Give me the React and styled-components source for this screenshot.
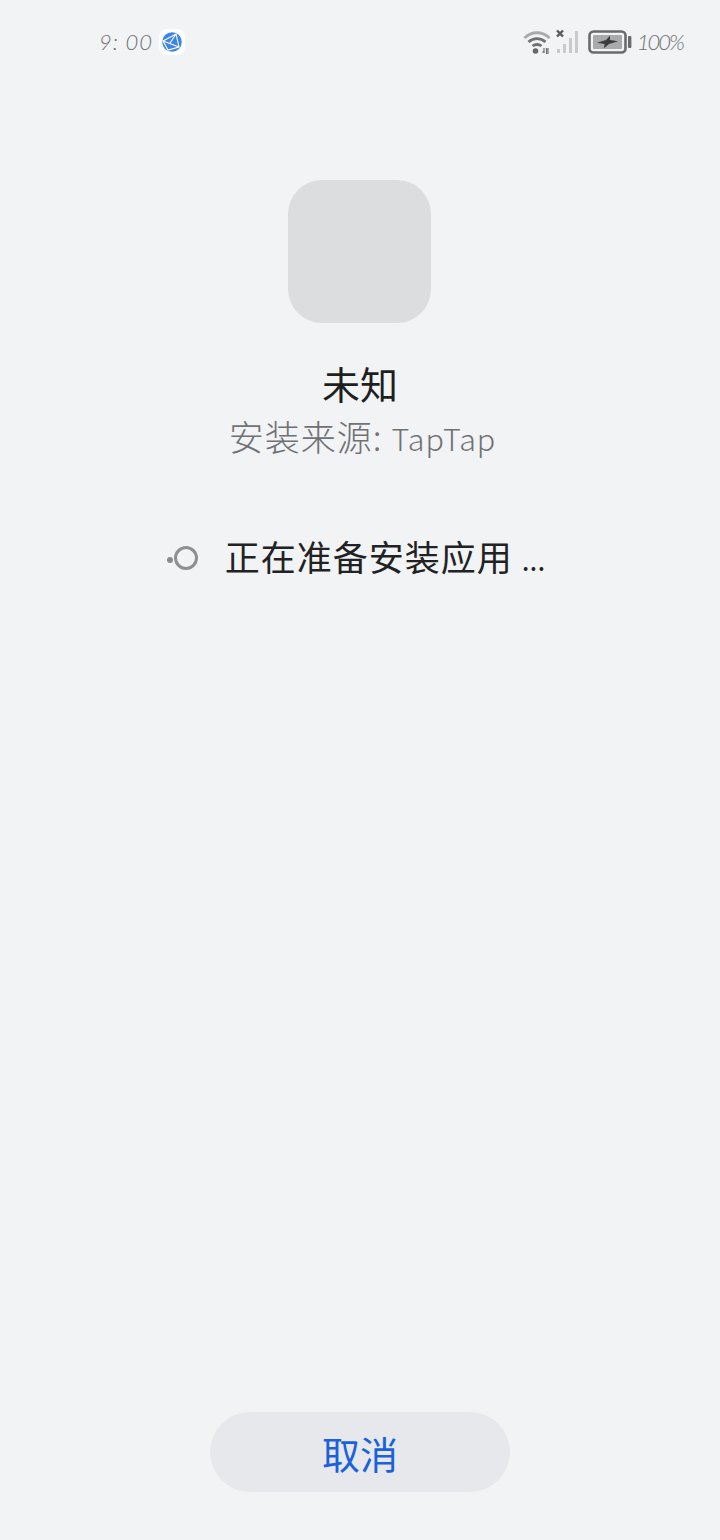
import React from "react";
import styled, { createGlobalStyle } from "styled-components";

const GlobalStyle = createGlobalStyle`
  html, body {
    margin: 0;
    padding: 0;
    background: #f1f3f5;
  }
  body {
    font-family: "Noto Sans CJK SC", "Noto Sans", sans-serif;
  }
`;

const Page = styled.div`
  width: 720px;
  height: 1540px;
  background: #f1f3f5;
  display: flex;
  flex-direction: column;
  align-items: center;
  box-sizing: border-box;
`;

const StatusBar = styled.div`
  width: 100%;
  height: 84px;
  box-sizing: border-box;
  padding: 0 37px 0 99px;
  display: flex;
  align-items: center;
  justify-content: space-between;
  flex-shrink: 0;
`;

const StatusGroup = styled.div`
  display: flex;
  align-items: center;
  gap: ${(p) => p.$gap || 0}px;
`;

const StatusText = styled.span`
  font-family: "Lato", "Liberation Sans", sans-serif;
  font-style: italic;
  font-weight: 300;
  font-size: 22px;
  line-height: 30px;
  letter-spacing: ${(p) => p.$spacing || 0}px;
  color: #6f7173;
`;

const AppIcon = styled.div`
  width: 143px;
  height: 143px;
  margin: 96px 1px 0 0;
  border-radius: 34px;
  background: #dcddde;
  flex-shrink: 0;
`;

const AppName = styled.div`
  margin-top: 33px;
  font-size: 38px;
  line-height: 54px;
  font-weight: 400;
  color: #1f1f1f;
`;

const Source = styled.div`
  padding-left: 5px;
  font-size: 35px;
  line-height: 52px;
  font-weight: 300;
  color: #707172;
  letter-spacing: 1px;
`;

const SourceName = styled.span`
  font-size: 30.5px;
  margin-left: 9px;
`;

const ProgressRow = styled.div`
  margin-top: 67px;
  display: flex;
  align-items: center;
  gap: 27px;
`;

const Spinner = styled.div`
  position: relative;
  width: 24px;
  height: 24px;
  margin-left: 3px;
  border: 3px solid #8e8f90;
  border-radius: 50%;
  box-sizing: border-box;

  &::before {
    content: "";
    position: absolute;
    left: -10px;
    top: 8px;
    width: 6px;
    height: 6px;
    border-radius: 50%;
    background: #8a8b8c;
  }
`;

const ProgressText = styled.div`
  font-size: 35px;
  line-height: 50px;
  font-weight: 400;
  letter-spacing: 1px;
  color: #222222;
`;

const Ellipsis = styled.span`
  font-size: 28px;
  margin: 0 4px 0 9px;
  letter-spacing: 0;
`;

const Spacer = styled.div`
  flex: 1;
`;

const CancelButton = styled.button`
  width: 300px;
  height: 80px;
  margin-bottom: 48px;
  border: 0;
  border-radius: 40px;
  background: #e6e8eb;
  color: #1a62dd;
  font-family: inherit;
  font-size: 38px;
  font-weight: 400;
  padding: 0;
  flex-shrink: 0;
`;

const GlobeIcon = () => (
  <svg width="26" height="26" viewBox="0 0 26 26">
    <rect width="26" height="26" rx="8" fill="#ffffff" />
    <circle cx="13" cy="13" r="9.8" fill="#3f85e6" />
    <path d="M4 12 L17 5 L20 18 L9 21 Z M4 12 L20 18 M17 5 L11 14" fill="none" stroke="#ffffff" strokeWidth="1.1" />
  </svg>
);

const WifiIcon = () => (
  <svg width="28" height="26" viewBox="0 0 28 26" fill="none">
    <path d="M1.5 9 C8.5 2 19.5 2 26.5 9" stroke="#a9aaab" strokeWidth="2.8" />
    <path d="M5.5 13 C10.5 8.5 17.5 8.5 22.5 13" stroke="#707172" strokeWidth="2.8" />
    <path d="M9.5 17 C12 15 16 15 18.5 17" stroke="#707172" strokeWidth="2.8" />
    <circle cx="12.5" cy="22" r="2.8" fill="#666769" />
    <path d="M19 23 h2.5 M21 19 v5 M25 19 v6 M23.5 19 v6" stroke="#707172" strokeWidth="1.2" />
  </svg>
);

const SignalIcon = () => (
  <svg width="27" height="26" viewBox="0 0 27 26" fill="none">
    <path d="M1 1.5 L7 7.5 M7 1.5 L1 7.5" stroke="#58595b" strokeWidth="2.4" />
    <rect x="1" y="20" width="3" height="4" fill="#c9cacb" />
    <rect x="7" y="15" width="3" height="9" fill="#c9cacb" />
    <rect x="13" y="9" width="3" height="15" fill="#c9cacb" />
    <rect x="19" y="2" width="3" height="22" fill="#c9cacb" />
  </svg>
);

const BatteryIcon = () => (
  <svg width="44" height="26" viewBox="0 0 44 26" fill="none">
    <rect x="1.5" y="2.5" width="36" height="21" rx="4" stroke="#6a6b6d" strokeWidth="2.6" />
    <rect x="5" y="6" width="29" height="14" rx="1" fill="#a9aaab" />
    <path d="M9 13.8 L18 11 L22 6.8 L22 11 L30 12.2 L21 15 L16 19.2 L16.5 15 Z" fill="#3a3b3d" />
    <rect x="40" y="7" width="3.4" height="12" rx="1" fill="#6a6b6d" />
  </svg>
);

export default function App() {
  return (
    <>
      <GlobalStyle />
      <Page>
        <StatusBar>
          <StatusGroup $gap={6}>
            <StatusText $spacing={1}>9: 00</StatusText>
            <GlobeIcon />
          </StatusGroup>
          <StatusGroup $gap={5}>
            <WifiIcon />
            <SignalIcon />
            <BatteryIcon />
            <StatusText $spacing={-2}>100%</StatusText>
          </StatusGroup>
        </StatusBar>
        <AppIcon />
        <AppName>未知</AppName>
        <Source>安装来源:<SourceName>TapTap</SourceName></Source>
        <ProgressRow>
          <Spinner />
          <ProgressText>正在准备安装应用<Ellipsis>...</Ellipsis></ProgressText>
        </ProgressRow>
        <Spacer />
        <CancelButton>取消</CancelButton>
      </Page>
    </>
  );
}
